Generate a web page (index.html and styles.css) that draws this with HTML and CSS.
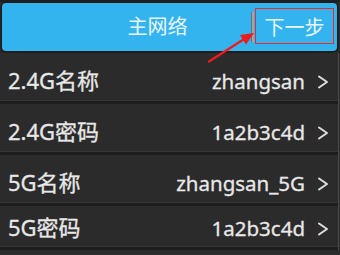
FILE: index.html
```html
<!DOCTYPE html>
<html lang="zh-CN">
<head>
<meta charset="utf-8">
<title>主网络</title>
<link rel="stylesheet" href="styles.css">
</head>
<body>
<div class="page">
  <header class="topbar">
    <div class="title">主网络</div>
    <div class="divider"></div>
    <div class="next">下一步</div>
  </header>
  <ul class="list">
    <li class="row">
      <span class="label">2.4G名称</span>
      <span class="value">zhangsan</span>
      <svg class="chev" viewBox="0 0 12 14" width="12" height="14"><path d="M2 1.5 L10 7 L2 12.5"/></svg>
    </li>
    <li class="row">
      <span class="label">2.4G密码</span>
      <span class="value">1a2b3c4d</span>
      <svg class="chev" viewBox="0 0 12 14" width="12" height="14"><path d="M2 1.5 L10 7 L2 12.5"/></svg>
    </li>
    <li class="row">
      <span class="label">5G名称</span>
      <span class="value">zhangsan_5G</span>
      <svg class="chev" viewBox="0 0 12 14" width="12" height="14"><path d="M2 1.5 L10 7 L2 12.5"/></svg>
    </li>
    <li class="row row-last">
      <span class="label">5G密码</span>
      <span class="value">1a2b3c4d</span>
      <svg class="chev" viewBox="0 0 12 14" width="12" height="14"><path d="M2 1.5 L10 7 L2 12.5"/></svg>
    </li>
  </ul>
  <svg class="annot" viewBox="0 0 340 255" width="340" height="255">
    <line x1="209" y1="61.5" x2="245" y2="38.5" stroke="#ee1c1c" stroke-width="2.4" stroke-linecap="round"/>
    <polygon points="254,33 240,35 246,44.5" fill="#ee1c1c"/>
  </svg>
</div>
</body>
</html>
```
FILE: styles.css
```css
* { box-sizing: border-box; }
html, body {
  margin: 0;
  padding: 0;
  background: #2b2b2b;
}
body {
  width: 340px;
  height: 255px;
  overflow: hidden;
  font-family: "Noto Sans", "Open Sans", "Noto Sans CJK SC", sans-serif;
}
.page {
  position: relative;
  width: 340px;
  height: 255px;
  background: #2b2b2b;
  border-top: 2px solid #202020;
}
.topbar {
  display: flex;
  align-items: center;
  height: 48px;
  margin: 1px 3px 0 2px;
  background: #34b4ee;
  border-radius: 4px;
  box-shadow: 0 0 0 1px #1c1c1c, 0 1px 2px 1px #181818;
  color: #eaf7fd;
  font-size: 20px;
}
.title {
  flex: 1;
  text-align: center;
  padding-left: 62px;
  line-height: 28px;
}
.divider {
  width: 3px;
  height: 30px;
  background: linear-gradient(to right, #5e7480 0, #5e7480 1px, #a4a4a4 1px);
}
.next {
  width: 79px;
  height: 36px;
  margin: 0 3px 2px 1px;
  border: 1px solid #f02a2a;
  display: flex;
  align-items: center;
  justify-content: center;
}
.list {
  list-style: none;
  margin: 2px 0 0 0;
  padding: 0;
  width: 339px;
  border-right: 1px solid #4a4a4a;
}
.row {
  display: flex;
  align-items: baseline;
  height: 51px;
  padding: 12px 9px 0 8px;
  border-bottom: 3px solid #1d1d1d;
  box-shadow: inset 0 -1px 0 #363636;
  background: #2b2b2b;
  color: #e8e8e8;
  -webkit-text-stroke: 0.3px #e8e8e8;
}
.row-last {
  height: 44px;
  padding-top: 6px;
}
.label {
  flex: 1;
  font-size: 22px;
  line-height: 30px;
}
.value {
  font-size: 20.5px;
  line-height: 30px;
  margin-right: 12px;
}
.chev {
  display: inline-block;
  fill: none;
  stroke: #dedede;
  stroke-width: 2;
  stroke-linecap: round;
  stroke-linejoin: round;
}
.annot {
  position: absolute;
  left: 0;
  top: -2px;
  pointer-events: none;
}
```
